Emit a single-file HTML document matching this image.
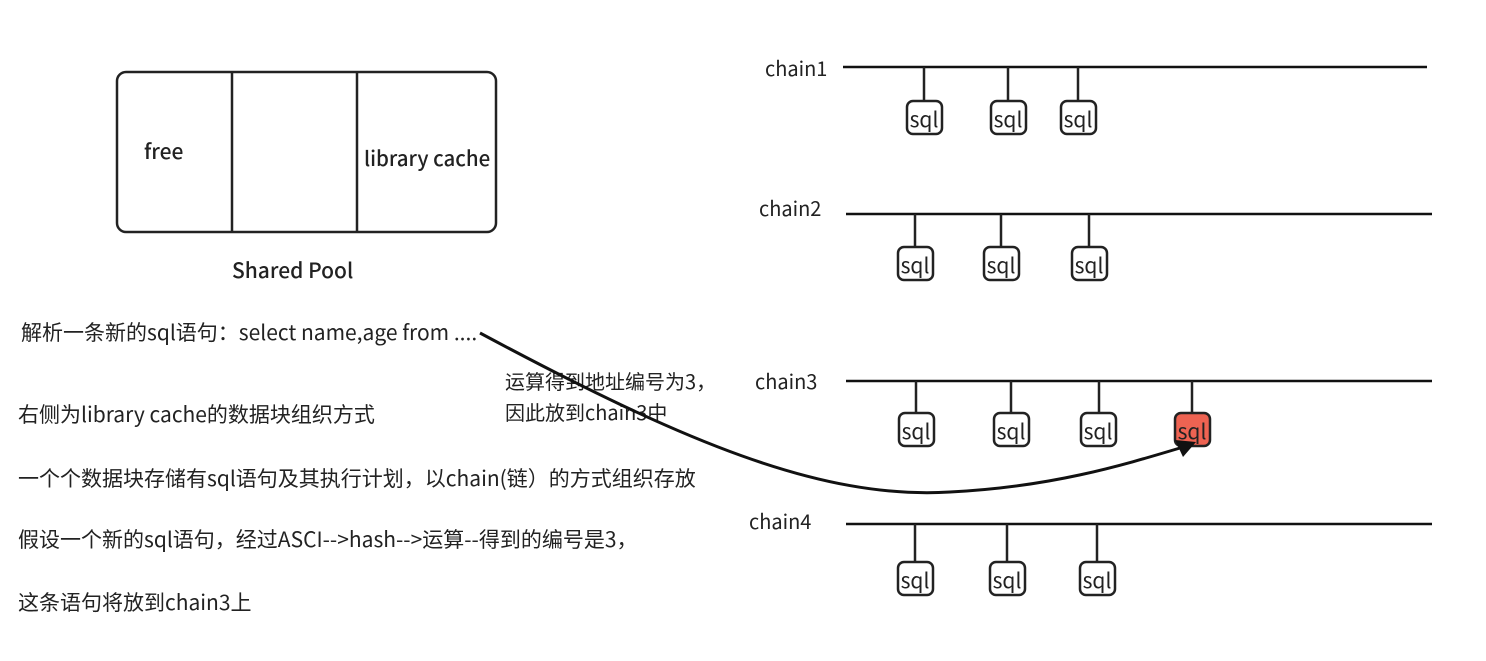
<!DOCTYPE html>
<html><head><meta charset="utf-8"><style>
html,body{margin:0;padding:0;background:#fff;}
svg text{font-family:"Noto Sans CJK SC","Liberation Sans",sans-serif;fill:#222;}
</style></head><body>
<svg width="1486" height="656" viewBox="0 0 1486 656" xmlns="http://www.w3.org/2000/svg">
<rect x="117" y="72" width="379" height="160" rx="9" fill="none" stroke="#222" stroke-width="2.5"/>
<line x1="232" y1="72" x2="232" y2="232" stroke="#222" stroke-width="2.5"/>
<line x1="357" y1="72" x2="357" y2="232" stroke="#222" stroke-width="2.5"/>
<text x="144" y="159" font-size="21" font-weight="500">free</text>
<text x="364" y="166" font-size="20.5" font-weight="500">library cache</text>
<text x="232" y="278" font-size="21" font-weight="500">Shared  Pool</text>

<g font-size="21">
<text x="21" y="340">解析一条新的sql语句：select name,age from ....</text>
<text x="18" y="422">右侧为library cache的数据块组织方式</text>
<text x="18" y="486">一个个数据块存储有sql语句及其执行计划，以chain(链）的方式组织存放</text>
<text x="18" y="547">假设一个新的sql语句，经过ASCI--&gt;hash--&gt;运算--得到的编号是3，</text>
<text x="18" y="610">这条语句将放到chain3上</text>
</g>
<g font-size="20">
<text x="505" y="389">运算得到地址编号为3，</text>
<text x="505" y="420">因此放到chain3中</text>
</g>

<g font-size="20">
<text x="765" y="76">chain1</text>
<text x="759" y="216">chain2</text>
<text x="755" y="389">chain3</text>
<text x="749" y="529">chain4</text>
</g>

<g stroke="#111" stroke-width="2.5">
<line x1="843" y1="67" x2="1427" y2="67"/>
<line x1="846" y1="214" x2="1432" y2="214"/>
<line x1="846" y1="381" x2="1432" y2="381"/>
<line x1="846" y1="524" x2="1432" y2="524"/>
</g>

<g stroke="#222" stroke-width="2.5">
<line x1="924" y1="67" x2="924" y2="101"/><rect x="907" y="101" width="35" height="33" rx="6" fill="#fff"/>
<line x1="1008" y1="67" x2="1008" y2="101"/><rect x="991" y="101" width="35" height="33" rx="6" fill="#fff"/>
<line x1="1078" y1="67" x2="1078" y2="101"/><rect x="1061" y="101" width="35" height="33" rx="6" fill="#fff"/>
<line x1="915" y1="214" x2="915" y2="247"/><rect x="898" y="247" width="35" height="33" rx="6" fill="#fff"/>
<line x1="1001" y1="214" x2="1001" y2="247"/><rect x="984" y="247" width="35" height="33" rx="6" fill="#fff"/>
<line x1="1089" y1="214" x2="1089" y2="247"/><rect x="1072" y="247" width="35" height="33" rx="6" fill="#fff"/>
<line x1="916" y1="381" x2="916" y2="413"/><rect x="899" y="413" width="35" height="33" rx="6" fill="#fff"/>
<line x1="1011" y1="381" x2="1011" y2="413"/><rect x="994" y="413" width="35" height="33" rx="6" fill="#fff"/>
<line x1="1099" y1="381" x2="1099" y2="413"/><rect x="1081" y="413" width="35" height="33" rx="6" fill="#fff"/>
<line x1="1192" y1="381" x2="1192" y2="413"/><rect x="1175" y="413" width="35" height="33" rx="6" fill="#ee6352"/>
<line x1="915" y1="524" x2="915" y2="562"/><rect x="898" y="562" width="35" height="33" rx="6" fill="#fff"/>
<line x1="1007" y1="524" x2="1007" y2="562"/><rect x="990" y="562" width="35" height="33" rx="6" fill="#fff"/>
<line x1="1097" y1="524" x2="1097" y2="562"/><rect x="1080" y="562" width="35" height="33" rx="6" fill="#fff"/>
</g>
<g font-size="21" text-anchor="middle">
<text x="924" y="127">sql</text><text x="1008" y="127">sql</text><text x="1078" y="127">sql</text>
<text x="915" y="273">sql</text><text x="1001" y="273">sql</text><text x="1089" y="273">sql</text>
<text x="916" y="439">sql</text><text x="1011" y="439">sql</text><text x="1098" y="439">sql</text><text x="1192" y="439">sql</text>
<text x="915" y="588">sql</text><text x="1007" y="588">sql</text><text x="1097" y="588">sql</text>
</g>

<path d="M480,333 C680,440 820,500 950,492 C1050,487 1120,466 1180,448" fill="none" stroke="#111" stroke-width="3"/>
<polygon points="1196,442 1175,440 1183,457" fill="#111"/>
</svg>
</body></html>
